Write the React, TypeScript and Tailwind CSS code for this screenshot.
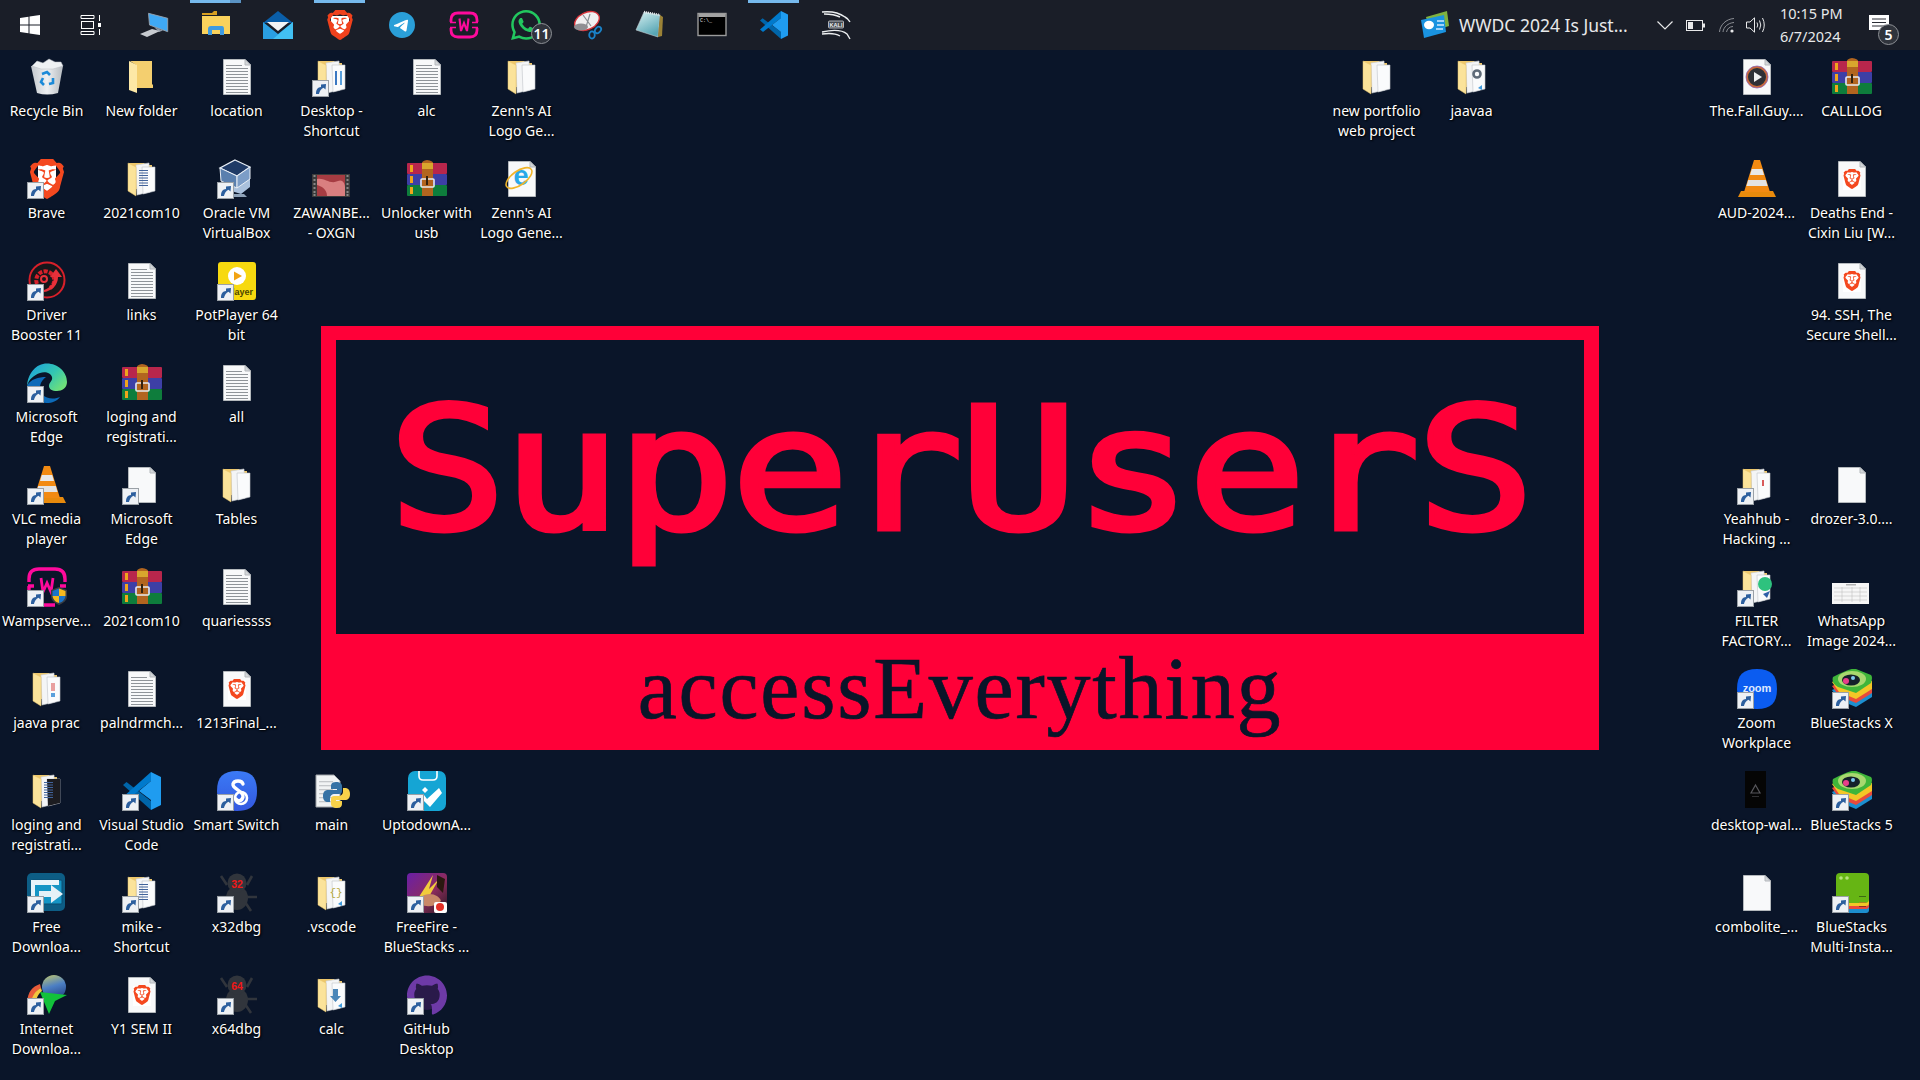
import React, { ReactNode } from 'react';
import { SiBrave, SiTelegram, SiWhatsapp, SiGithub } from 'react-icons/si';

// ---------- helpers ----------
function S({ children }: { children: ReactNode }) {
  return <svg viewBox="0 0 40 40" className="w-10 h-10 block">{children}</svg>;
}
function T({ children }: { children: ReactNode }) {
  return <svg viewBox="0 0 30 30" className="w-[30px] h-[30px] block">{children}</svg>;
}

function Shortcut() {
  return (
    <svg viewBox="0 0 17 17" className="absolute left-0 bottom-0 w-[17px] h-[17px]">
      <rect x="0.5" y="0.5" width="16" height="16" fill="#eef1f5" stroke="#9aa0a6" />
      <path d="M4 14 C4 9 6 7.5 9 7 L9 4.5 L14 4 L13.5 9.5 L11.5 7.8 C9 9 7.5 11 7 14 Z" fill="#2c5f9e" />
    </svg>
  );
}

// ---------- file type icons ----------
function Doc({ lines, children }: { lines?: boolean; children?: ReactNode }) {
  return (
    <S>
      <path d="M6.5 2.5 H28 L33.5 8 V37.5 H6.5 Z" fill="#f8f9fa" stroke="#b4b8bc" />
      <path d="M28 2.5 V8 H33.5 Z" fill="#d3d6d9" stroke="#b4b8bc" />
      {lines &&
        [8, 11, 14, 17, 20, 23, 26, 29, 32, 35].map(y => (
          <rect key={y} x="9" y={y} width={y === 8 ? 16 : 22} height="1" fill="#8f9499" />
        ))}
      {children}
    </S>
  );
}

function FileBrave() {
  return (
    <Doc>
      <rect x="11" y="11" width="18" height="20" fill="#fff" />
      <SiBrave x={10} y={10} size={20} color="#f4481f" />
    </Doc>
  );
}

function FileMovie() {
  return (
    <Doc>
      <circle cx="20" cy="20" r="10" fill="#2f3136" stroke="#c96a3a" strokeWidth="2" />
      <circle cx="20" cy="20" r="11" fill="none" stroke="#8d63b5" strokeWidth="0.8" />
      <path d="M17 15 L25 20 L17 25 Z" fill="#f2f2f2" />
    </Doc>
  );
}

function FileIE() {
  return (
    <Doc>
      <text x="19" y="26" textAnchor="middle" fontFamily="'Liberation Sans',sans-serif" fontWeight="700" fontSize="27" fill="#28a8e8">e</text>
      <ellipse cx="17" cy="19" rx="15" ry="7" transform="rotate(-35 17 19)" fill="none" stroke="#f0b429" strokeWidth="1.6" />
    </Doc>
  );
}

function FilePython() {
  return (
    <S>
      <path d="M4 4 H22 L28 10 V36 H4 Z" fill="#f1f3f4" stroke="#9fa3a7" />
      {[10, 14, 18, 22, 26, 30].map(y => (
        <rect key={y} x="7" y={y} width="14" height="1.3" fill="#c4c7ca" />
      ))}
      <path d="M24 11 C19 11 19 14 19 16 V18 H25 V19 H16 C13 19 11 21 11 25 C11 29 13 31 16 31 H18 V27 C18 25 20 23 22 23 H27 C29 23 30 22 30 20 V15 C30 13 28 11 24 11 Z" fill="#3572a5" />
      <path d="M25 37 C30 37 30 34 30 32 V30 H24 V29 H33 C36 29 38 27 38 23 C38 19 36 17 33 17 H31 V21 C31 23 29 25 27 25 H22 C20 25 19 26 19 28 V33 C19 35 21 37 25 37 Z" fill="#f8d24a" />
    </S>
  );
}

// ---------- folders ----------
function Folder({ children }: { children?: ReactNode }) {
  return (
    <S>
      <path d="M7 4 H22 L24 6 H30 V30 H7 Z" fill="#eec76a" />
      <path d="M14 6 L27 4 L28 33 L15 36 Z" fill="#f4f5f6" stroke="#c9ccd0" strokeWidth="0.6" />
      <path d="M20 8 L33 8 L33 32 L21 35 Z" fill="#fafbfc" stroke="#bfc3c7" strokeWidth="0.6" />
      {children}
      <path d="M6 4 L14 8 L14 37 L6 32 Z" fill="#fbe39a" stroke="#e6c36b" strokeWidth="0.5" />
    </S>
  );
}

function FolderEmpty() {
  return (
    <S>
      <path d="M8 4 H24 L30 4 V27 L31 28 V31 H14 V8 Z" fill="#f4cf6f" />
      <path d="M7 4 L15 8 V36 L7 33 Z" fill="#fde8a6" />
    </S>
  );
}

function DocLinesInFolder() {
  return (
    <g>
      {[11, 13.5, 16, 18.5, 21, 23.5, 26].map(y => (
        <rect key={y} x="17" y={y} width="9" height="1" fill="#41639a" />
      ))}
    </g>
  );
}

// ---------- app icons ----------
function RecycleBin() {
  return (
    <S>
      <defs>
        <linearGradient id="rb" x1="0" x2="1">
          <stop offset="0" stopColor="#c3c8cd" />
          <stop offset="0.5" stopColor="#eef0f2" />
          <stop offset="1" stopColor="#b6bbc0" />
        </linearGradient>
      </defs>
      <path d="M4 9 L36 9 L31 36 Q20 39 10 36 Z" fill="url(#rb)" />
      <path d="M5 9 L10 4 L16 6 L22 2 L28 5 L34 5 L36 9 L26 12 L14 12 Z" fill="#eef1f3" stroke="#b9bdc2" strokeWidth="0.5" />
      <path d="M15 17 L20 15 L23 18 M26 21 L26 26 L22 27 M17 28 L14 25 L16 21" fill="none" stroke="#1b8ad8" strokeWidth="2.6" />
    </S>
  );
}

function WinRar() {
  return (
    <S>
      <rect x="0" y="4" width="40" height="11" rx="1" fill="#b8264c" />
      <rect x="0" y="15" width="40" height="11" rx="1" fill="#3d3fa6" />
      <rect x="0" y="26" width="40" height="11" rx="1" fill="#0e7d3c" />
      <rect x="3" y="6" width="3" height="7" fill="#f0a51c" />
      <rect x="3" y="17" width="3" height="7" fill="#f0a51c" />
      <rect x="3" y="28" width="3" height="7" fill="#f0a51c" />
      <path d="M15 4 Q15 2 20 1 Q26 2 26 4 V37 H15 Z" fill="#b2651f" />
      <rect x="15" y="4" width="11" height="6" fill="#d8a62d" />
      <rect x="14" y="20" width="13" height="8" rx="1" fill="none" stroke="#e9ecef" strokeWidth="1.6" />
      <rect x="19" y="17" width="2" height="9" fill="#33220f" />
    </S>
  );
}

function Brave() {
  return (
    <S>
      <path d="M11 6 H29 V24 L20 34 L11 24 Z" fill="#fff" />
      <SiBrave x={0} y={0} size={40} color="#f4481f" />
    </S>
  );
}

function VirtualBox() {
  return (
    <S>
      <path d="M4 14 L20 22 L33 14 V28 L24 35 L8 30 Z" fill="#a9c0dc" />
      <path d="M16 35 L27 35 L30 38 L14 38 Z" fill="#8ea2b8" />
      <path d="M18 1 L33 8 L20 17 L3 9 Z" fill="#1f3a66" stroke="#e7edf5" strokeWidth="1.3" />
      <path d="M3 9 L20 17 V29 L4 22 Z" fill="#5a7fae" stroke="#e7edf5" strokeWidth="1" />
      <path d="M20 17 L33 8 V20 L20 29 Z" fill="#7c9dc7" stroke="#e7edf5" strokeWidth="1" />
    </S>
  );
}

function FilmThumb() {
  return (
    <S>
      <rect x="0" y="15" width="38" height="23" fill="#3a3a3a" />
      <rect x="5" y="16" width="28" height="21" fill="#a63c42" />
      <path d="M5 20 C12 18 18 26 26 22 C30 20 33 24 33 28 V37 H15 C15 30 9 27 5 26 Z" fill="#d97f80" />
      {[16, 20, 24, 28, 32, 35].map(y => (
        <g key={y}>
          <rect x="1.5" y={y} width="2" height="2" fill="#888" />
          <rect x="34.5" y={y} width="2" height="2" fill="#888" />
        </g>
      ))}
    </S>
  );
}

function DriverBooster() {
  return (
    <S>
      <circle cx="20" cy="19" r="17.5" fill="#17171b" stroke="#d8202a" strokeWidth="2" />
      <path d="M10 23 A9 9 0 1 1 23 27" fill="none" stroke="#d8202a" strokeWidth="4" strokeDasharray="4 1.4" />
      <circle cx="17" cy="18" r="3" fill="#17171b" stroke="#e8303a" strokeWidth="2" />
      <path d="M17 29 C24 27 27 21 27 16 H23 L29 8 L35 16 H31 C31 24 25 30 17 31 Z" fill="#e8303a" />
    </S>
  );
}

function PotPlayer() {
  return (
    <S>
      <rect x="1" y="1" width="38" height="38" rx="3" fill="#f7d90f" />
      <circle cx="20" cy="15" r="9" fill="#fff" />
      <path d="M17 10.5 L25 15 L17 19.5 Z" fill="#f2a312" />
      <text x="9" y="34" fontFamily="'Liberation Sans',sans-serif" fontWeight="700" fontSize="9" fill="#4c4600">Player</text>
    </S>
  );
}

function Edge() {
  return (
    <S>
      <defs>
        <linearGradient id="edgeA" x1="0" y1="0" x2="1" y2="0.7">
          <stop offset="0" stopColor="#1b9de2" />
          <stop offset="0.6" stopColor="#33c6b2" />
          <stop offset="1" stopColor="#6fe07a" />
        </linearGradient>
      </defs>
      <path d="M20 0.5 C31 0.5 40 9 40 19 C40 25 35 28 30 28 C25 28 22 26 22 23 C22 19 26 18 25 14 C24 10 18 8 13 10 C7 12 2 16 0 23 C1 10 9 0.5 20 0.5 Z" fill="url(#edgeA)" />
      <path d="M0 23 C0 33 9 40 20 40 C25 40 30 38 33 34 C29 36 20 37 15 31 C11 26 13 18 19 14 C12 14 3 16 0 23 Z" fill="#0d6ab8" />
    </S>
  );
}

function Vlc() {
  return (
    <S>
      <path d="M4 32 H36 L39 38 H1 Z" fill="#e88a0c" />
      <path d="M17 1 H23 L33 33 H7 Z" fill="#f28a12" />
      <path d="M14.8 10 H25.2 L27 16 H13 Z" fill="#e8e8e8" />
      <path d="M11.2 21 H28.8 L30.6 27 H9.4 Z" fill="#e3e3e3" />
    </S>
  );
}

function WampShield() {
  return (
    <svg viewBox="0 0 16 18" x="24" y="20" width="16" height="18">
      <path d="M8 0 L16 3 V9 C16 14 12 16 8 18 C4 16 0 14 0 9 V3 Z" fill="#3a3d42" />
      <path d="M8 1.5 V9 H1.5 V4 Z" fill="#1c74c9" />
      <path d="M8 1.5 L14.5 4 V9 H8 Z" fill="#f6b91e" />
      <path d="M1.5 9 H8 V16 C4 15 2 12 1.5 9 Z" fill="#f6b91e" />
      <path d="M8 9 H14.5 C14 12 12 15 8 16 Z" fill="#1c74c9" />
    </svg>
  );
}

function Wamp() {
  return (
    <S>
      <path d="M2 15 V12 C2 5 6 2 12 2 H28 C34 2 38 5 38 12 V15 M1 19 H7 M33 19 H39 M2 19 V27 C2 34 6 38 12 38 H28" fill="none" stroke="#ff0a9c" strokeWidth="3.4" />
      <path d="M14 11 L16 25 L20 16 L24 25 L26 11" fill="none" stroke="#ff0a9c" strokeWidth="2.8" />
      <WampShield />
    </S>
  );
}

function VsCode() {
  return (
    <S>
      <path d="M1 14 L4.5 11 L29 30 V39 Z" fill="#0065a9" />
      <path d="M29 1 V10 L5 29 L1 26 Z" fill="#007acc" />
      <path d="M29 1 L39 6 V34 L29 39 V29 L17 20 L29 10 Z" fill="#1f9cf0" />
    </S>
  );
}

function SmartSwitch() {
  return (
    <S>
      <defs>
        <linearGradient id="ss" x1="0" y1="0" x2="0" y2="1">
          <stop offset="0" stopColor="#3b7af5" />
          <stop offset="1" stopColor="#3358e0" />
        </linearGradient>
      </defs>
      <path d="M20 0 C34 0 40 6 40 20 C40 34 34 40 20 40 C6 40 0 34 0 20 C0 6 6 0 20 0 Z" fill="url(#ss)" />
      <path d="M26 13 C25 9 17 9 16 13 C15 18 27 20 26 26 C25 30 21 31 19 28" fill="none" stroke="#fff" strokeWidth="3.4" strokeLinecap="round" />
      <circle cx="24" cy="27" r="6" fill="none" stroke="#fff" strokeWidth="2.6" />
    </S>
  );
}

function Uptodown() {
  return (
    <S>
      <rect x="1" y="0" width="38" height="40" rx="7" fill="#15a5d4" />
      <path d="M12 0 V5 Q12 9 16 9 H26 Q30 9 30 5 V0" fill="none" stroke="#fff" strokeWidth="1.6" />
      <path d="M18 16 L21 19 L18 22 L15 19 Z" fill="#fff" />
      <path d="M20 28 L32 17 L35 22 L23 36 L14 27 L17 24 Z" fill="#fff" />
    </S>
  );
}

function Fdm() {
  return (
    <S>
      <rect x="0" y="0" width="38" height="38" rx="5" fill="#0d5d85" />
      <rect x="5" y="7" width="30" height="24" rx="1" fill="#1595c5" stroke="#0a4c70" />
      <rect x="4" y="7" width="28" height="5" fill="#e8f4fa" />
      <rect x="4" y="7" width="4" height="22" fill="#e8f4fa" />
      <path d="M12 18 H24 V12 L36 21 L24 30 V24 H12 Z" fill="#e6f1f7" />
    </S>
  );
}

function Bug({ n }: { n: string }) {
  return (
    <S>
      <path d="M4 3 L10 12 M35 3 L30 12 M0 24 H40 M5 38 L12 29 M34 38 L28 29" stroke="#31353c" strokeWidth="2.6" fill="none" />
      <ellipse cx="20" cy="25" rx="11" ry="12" fill="#31353c" />
      <circle cx="20" cy="10" r="9.5" fill="#31353c" />
      <text x="20" y="14.5" textAnchor="middle" fontFamily="'Liberation Sans',sans-serif" fontWeight="700" fontSize="10.5" fill="#f01818">{n}</text>
    </S>
  );
}

function FreeFire() {
  return (
    <S>
      <defs>
        <linearGradient id="ff" x1="0" y1="0" x2="1" y2="1">
          <stop offset="0" stopColor="#6a1fa8" />
          <stop offset="0.55" stopColor="#8c2b5e" />
          <stop offset="1" stopColor="#2b1a22" />
        </linearGradient>
      </defs>
      <rect x="0" y="0" width="40" height="40" rx="4" fill="url(#ff)" />
      <path d="M8 30 L26 2 L22 16 L32 6 L16 34 Z" fill="#f1cc3c" />
      <path d="M14 24 C22 18 32 22 34 28 C28 34 20 34 14 32 Z" fill="#c98868" />
      <path d="M30 2 L38 6 L36 20 L30 14 Z" fill="#2a1810" />
      <rect x="27" y="29" width="13" height="11" rx="2" fill="#fff" />
      <circle cx="33" cy="34" r="4" fill="#e53027" />
    </S>
  );
}

function Idm() {
  return (
    <S>
      <defs>
        <linearGradient id="idm" x1="0" y1="0" x2="0.3" y2="1">
          <stop offset="0" stopColor="#c4c86a" />
          <stop offset="0.55" stopColor="#4c7fc4" />
          <stop offset="1" stopColor="#2b4d90" />
        </linearGradient>
      </defs>
      <path d="M0 28 C1 16 5 12 13 9 L14 13 C9 16 6 20 6 30 Z" fill="#e85c3a" />
      <path d="M4 30 C4 22 8 16 14 13 L15 16 C11 19 9 23 9 30 Z" fill="#f2c63d" />
      <circle cx="27" cy="12" r="12" fill="url(#idm)" />
      <path d="M13 17 L40 20 L28 26 L22 39 Z" fill="#12c23a" />
    </S>
  );
}

function GitHubDesk() {
  return (
    <S>
      <circle cx="20" cy="20" r="15" fill="#2a1a4a" />
      <SiGithub x={0} y={0} size={40} color="#6e3aa7" />
    </S>
  );
}

function Zoom() {
  return (
    <S>
      <path d="M20 0 C34 0 40 6 40 20 C40 34 34 40 20 40 C6 40 0 34 0 20 C0 6 6 0 20 0 Z" fill="#0b5cf0" />
      <text x="20" y="23" textAnchor="middle" fontFamily="'Liberation Sans',sans-serif" fontWeight="700" fontSize="11" fill="#dfe9ff">zoom</text>
    </S>
  );
}

function BlueStacks() {
  return (
    <S>
      <path d="M0 21 L7 31 L24 38 L40 28 V20 L20 12 Z" fill="#1c8fd0" />
      <path d="M0 17 L7 27 L24 34 L40 24 V16 L20 8 Z" fill="#e94b3c" />
      <path d="M0 13 L7 23 L24 30 L40 20 V12 L20 4 Z" fill="#f4c627" />
      <path d="M1 8 Q20 -2 24 0 L39 6 Q41 8 39 14 L24 24 L6 18 Q-1 14 1 8 Z" fill="#3fb53a" />
      <ellipse cx="20" cy="10" rx="14" ry="8" fill="#a8d86f" />
      <ellipse cx="19" cy="11" rx="9" ry="5.5" fill="#14202a" />
      <circle cx="14" cy="12" r="3" fill="#e83d8a" />
      <circle cx="21" cy="9" r="2" fill="#7ec8f0" />
    </S>
  );
}

function BlueStacksMulti() {
  return (
    <S>
      <rect x="4" y="22" width="33" height="18" rx="3" fill="#1c8fd0" />
      <rect x="4" y="19" width="33" height="17" rx="3" fill="#e94b3c" />
      <rect x="4" y="16" width="33" height="17" rx="3" fill="#f4c627" />
      <rect x="4" y="0" width="33" height="30" rx="4" fill="#66b514" />
      <circle cx="9" cy="5" r="1.8" fill="#b6e27c" />
      <circle cx="15" cy="5" r="1.8" fill="#b6e27c" />
      <rect x="27" y="23" width="7" height="1" fill="#3c6b12" />
      <rect x="27" y="29" width="7" height="1" fill="#a6861e" />
      <rect x="27" y="33" width="7" height="1" fill="#8d2e24" />
    </S>
  );
}

function ImageThumb() {
  return (
    <S>
      <rect x="0" y="16" width="37" height="21" fill="#f6f6f6" />
      <path d="M2 21 H35 M2 25 H35 M2 29 H35 M2 33 H35 M10 20 V35 M20 20 V35 M28 20 V35" stroke="#b5b5b5" strokeWidth="0.5" />
      <rect x="14" y="17" width="10" height="1.5" fill="#b0b0b0" />
    </S>
  );
}

function DarkThumb() {
  return (
    <S>
      <rect x="8" y="0" width="21" height="37" fill="#050505" />
      <path d="M18.5 14 L23 22 H14 Z" fill="none" stroke="#57575c" strokeWidth="1.2" />
      <rect x="15" y="25" width="7" height="0.8" fill="#3c3c40" />
    </S>
  );
}

// ---------- desktop data ----------
const items: [string, ReactNode, string[], boolean?][] = [
  ['col-start-1 row-start-1', <RecycleBin />, ['Recycle Bin']],
  ['col-start-1 row-start-2', <Brave />, ['Brave'], true],
  ['col-start-1 row-start-3', <DriverBooster />, ['Driver', 'Booster 11'], true],
  ['col-start-1 row-start-4', <Edge />, ['Microsoft', 'Edge'], true],
  ['col-start-1 row-start-5', <Vlc />, ['VLC media', 'player'], true],
  ['col-start-1 row-start-6', <Wamp />, ['Wampserve...'], true],
  [
    'col-start-1 row-start-7',
    <Folder>
      <rect x="24" y="14" width="4" height="8" fill="#e8a0a0" />
      <rect x="24" y="24" width="4" height="4" fill="#5aa0dc" />
    </Folder>,
    ['jaava prac'],
  ],
  [
    'col-start-1 row-start-8',
    <Folder>
      <path d="M20 8 L33 8 L33 32 L21 35 Z" fill="#1c1c20" />
      <DocLinesInFolder />
    </Folder>,
    ['loging and', 'registrati...'],
  ],
  ['col-start-1 row-start-9', <Fdm />, ['Free', 'Downloa...'], true],
  ['col-start-1 row-start-10', <Idm />, ['Internet', 'Downloa...'], true],

  ['col-start-2 row-start-1', <FolderEmpty />, ['New folder']],
  [
    'col-start-2 row-start-2',
    <Folder>
      <DocLinesInFolder />
    </Folder>,
    ['2021com10'],
  ],
  ['col-start-2 row-start-3', <Doc lines />, ['links']],
  ['col-start-2 row-start-4', <WinRar />, ['loging and', 'registrati...']],
  ['col-start-2 row-start-5', <Doc />, ['Microsoft', 'Edge'], true],
  ['col-start-2 row-start-6', <WinRar />, ['2021com10']],
  ['col-start-2 row-start-7', <Doc lines />, ['palndrmch...']],
  ['col-start-2 row-start-8', <VsCode />, ['Visual Studio', 'Code'], true],
  [
    'col-start-2 row-start-9',
    <Folder>
      <DocLinesInFolder />
    </Folder>,
    ['mike -', 'Shortcut'],
    true,
  ],
  ['col-start-2 row-start-10', <FileBrave />, ['Y1 SEM II']],

  ['col-start-3 row-start-1', <Doc lines />, ['location']],
  ['col-start-3 row-start-2', <VirtualBox />, ['Oracle VM', 'VirtualBox'], true],
  ['col-start-3 row-start-3', <PotPlayer />, ['PotPlayer 64', 'bit'], true],
  ['col-start-3 row-start-4', <Doc lines />, ['all']],
  ['col-start-3 row-start-5', <Folder />, ['Tables']],
  ['col-start-3 row-start-6', <Doc lines />, ['quariessss']],
  ['col-start-3 row-start-7', <FileBrave />, ['1213Final_...']],
  ['col-start-3 row-start-8', <SmartSwitch />, ['Smart Switch'], true],
  ['col-start-3 row-start-9', <Bug n="32" />, ['x32dbg'], true],
  ['col-start-3 row-start-10', <Bug n="64" />, ['x64dbg'], true],

  [
    'col-start-4 row-start-1',
    <Folder>
      <rect x="23" y="14" width="2" height="14" fill="#3a78c2" />
      <rect x="28" y="14" width="2" height="14" fill="#5aa0dc" />
    </Folder>,
    ['Desktop -', 'Shortcut'],
    true,
  ],
  ['col-start-4 row-start-2', <FilmThumb />, ['ZAWANBE...', '- OXGN']],
  ['col-start-4 row-start-8', <FilePython />, ['main']],
  [
    'col-start-4 row-start-9',
    <Folder>
      <text x="24" y="23" textAnchor="middle" fontFamily="'Liberation Mono',monospace" fontSize="11" fill="#b8a83c">{'{}'}</text>
      <path d="M30 28 L26 31 L30 33 Z" fill="#3f9adc" />
    </Folder>,
    ['.vscode'],
  ],
  [
    'col-start-4 row-start-10',
    <Folder>
      <path d="M21 14 H26 V21 H29 L23.5 27 L18 21 H21 Z" fill="#4b86b8" />
      <path d="M30 28 L26 31 L30 33 Z" fill="#3f9adc" />
    </Folder>,
    ['calc'],
  ],

  ['col-start-5 row-start-1', <Doc lines />, ['alc']],
  ['col-start-5 row-start-2', <WinRar />, ['Unlocker with', 'usb']],
  ['col-start-5 row-start-8', <Uptodown />, ['UptodownA...'], true],
  ['col-start-5 row-start-9', <FreeFire />, ['FreeFire -', 'BlueStacks ...'], true],
  ['col-start-5 row-start-10', <GitHubDesk />, ['GitHub', 'Desktop'], true],

  ['col-start-6 row-start-1', <Folder />, ["Zenn's AI", 'Logo Ge...']],
  ['col-start-6 row-start-2', <FileIE />, ["Zenn's AI", 'Logo Gene...']],

  ['col-start-15 row-start-1', <Folder />, ['new portfolio', 'web project']],
  [
    'col-start-16 row-start-1',
    <Folder>
      <circle cx="25" cy="17" r="3.5" fill="none" stroke="#5f6b78" strokeWidth="2.6" />
      <path d="M30 28 L26 31 L30 33 Z" fill="#3f9adc" />
    </Folder>,
    ['jaavaa'],
  ],

  ['col-start-19 row-start-1', <FileMovie />, ['The.Fall.Guy....']],
  ['col-start-19 row-start-2', <Vlc />, ['AUD-2024...']],
  [
    'col-start-19 row-start-5',
    <Folder>
      <rect x="25" y="15" width="2" height="6" fill="#d85a5a" />
    </Folder>,
    ['Yeahhub -', 'Hacking ...'],
    true,
  ],
  [
    'col-start-19 row-start-6',
    <Folder>
      <circle cx="28" cy="17" r="7" fill="#2ec27e" />
      <path d="M26 27 L33 24 L30 31 Z" fill="#2f5fa8" />
    </Folder>,
    ['FILTER', 'FACTORY...'],
    true,
  ],
  ['col-start-19 row-start-7', <Zoom />, ['Zoom', 'Workplace'], true],
  ['col-start-19 row-start-8', <DarkThumb />, ['desktop-wal...']],
  ['col-start-19 row-start-9', <Doc />, ['combolite_...']],

  ['col-start-20 row-start-1', <WinRar />, ['CALLLOG']],
  ['col-start-20 row-start-2', <FileBrave />, ['Deaths End -', 'Cixin Liu [W...']],
  ['col-start-20 row-start-3', <FileBrave />, ['94. SSH, The', 'Secure Shell...']],
  ['col-start-20 row-start-5', <Doc />, ['drozer-3.0....']],
  ['col-start-20 row-start-6', <ImageThumb />, ['WhatsApp', 'Image 2024...']],
  ['col-start-20 row-start-7', <BlueStacks />, ['BlueStacks X'], true],
  ['col-start-20 row-start-8', <BlueStacks />, ['BlueStacks 5'], true],
  ['col-start-20 row-start-9', <BlueStacksMulti />, ['BlueStacks', 'Multi-Insta...'], true],
];

function DesktopIcon({ cell, icon, lines, shortcut }: { cell: string; icon: ReactNode; lines: string[]; shortcut?: boolean }) {
  return (
    <div className={`${cell} flex flex-col items-center pt-[7px]`}>
      <div className="relative w-10 h-10">
        {icon}
        {shortcut && <Shortcut />}
      </div>
      <div className="mt-[4px] text-center text-white text-[14px] leading-5 whitespace-nowrap [text-shadow:1px_1px_2px_#000,0_0_2px_#000]">
        {lines.map((l, i) => (
          <div key={i}>{l}</div>
        ))}
      </div>
    </div>
  );
}

// ---------- taskbar ----------
const taskIcons: [ReactNode, boolean?, boolean?][] = [
  [
    <T>
      <path d="M9.5 3.3 L28.7 8.3 V21.7 L10.5 15 Z" fill="#3fa9f5" stroke="#9aa3ad" strokeWidth="0.9" />
      <path d="M15 17 L24 20.5 L20 22 Z" fill="#8d98a5" />
      <path d="M1 24 L13 19 L21 21 L8 27 Z" fill="#c7cbd0" />
    </T>,
  ],
  [
    <T>
      <path d="M1 3 H11 L13 1 H16 V5 H1 Z" fill="#d89f20" />
      <path d="M1 6 H29 V24 H1 Z" fill="#fad25c" />
      <path d="M10 24 V18 Q10 15 13 15 H24 Q26 15 26 18 V24 H22 V19 H14 V24 Z" fill="#3f9be0" transform="translate(-3 1)" />
    </T>,
    true,
    true,
  ],
  [
    <T>
      <path d="M15 1 L30 13 H0 Z" fill="#0a5ea8" />
      <path d="M4 12 H26 L15 21 Z" fill="#f2f4f5" />
      <path d="M0 12 L15 24 L30 12 V29 H0 Z" fill="#2a9fe2" />
      <path d="M30 12 V29 H10 Z" fill="#42c0f2" />
    </T>,
  ],
  [
    <T>
      <path d="M6 6 H24 V18 L15 29 L6 18 Z" fill="#fff" />
      <SiBrave x={0} y={0} size={30} color="#f0411c" />
    </T>,
    true,
  ],
  [
    <T>
      <circle cx="15" cy="15" r="11" fill="#fff" />
      <SiTelegram x={2} y={2} size={26} color="#2a9fd8" />
    </T>,
  ],
  [
    <T>
      <path d="M2 12 V10 C2 5 5 3 9 3 H21 C25 3 28 5 28 10 V12 M2 18 V20 C2 25 5 27 9 27 H21 C25 27 28 25 28 20 V18" fill="none" stroke="#ff0a9c" strokeWidth="2.8" />
      <path d="M1 12.5 H7 M23 12.5 H29 M1 17.5 H7 M23 17.5 H29" stroke="#ff0a9c" strokeWidth="1.5" />
      <path d="M10.5 8.5 L12 21 L15 13 L18 21 L19.5 8.5" fill="none" stroke="#ff0a9c" strokeWidth="2.1" />
    </T>,
  ],
  [
    <T>
      <SiWhatsapp x={0} y={0} size={30} color="#22c75f" />
    </T>,
  ],
  [
    <T>
      <ellipse cx="14" cy="11" rx="13" ry="8.5" transform="rotate(-25 14 11)" fill="#f0eff0" stroke="#d8333a" strokeWidth="1.4" />
      <path d="M10 5 L18 16 M17 4 L13 17" stroke="#8a8f94" strokeWidth="1.2" />
      <ellipse cx="8" cy="17" rx="7" ry="3.4" fill="#8f8f93" />
      <ellipse cx="19" cy="25" rx="2.8" ry="3.6" fill="none" stroke="#1a82c8" strokeWidth="1.8" />
      <ellipse cx="25" cy="20" rx="2.6" ry="3.6" transform="rotate(40 25 20)" fill="none" stroke="#1a82c8" strokeWidth="1.8" />
    </T>,
  ],
  [
    <T>
      <defs>
        <linearGradient id="np" x1="0" y1="0" x2="0.5" y2="1">
          <stop offset="0" stopColor="#d8f1f2" />
          <stop offset="1" stopColor="#57a6b4" />
        </linearGradient>
      </defs>
      <path d="M9 2 L25 5 L23 27 L1 20 Z" fill="url(#np)" stroke="#c5cdd2" strokeWidth="0.6" />
      <path d="M25 5 L28 7 L27 26 L23 27 Z" fill="#9b8236" />
      <path d="M9 2 L25 5" stroke="#e7ecee" strokeWidth="2.4" strokeDasharray="1 1" />
    </T>,
  ],
  [
    <T>
      <rect x="1" y="3.5" width="28" height="22" fill="#000" stroke="#9b9b9b" strokeWidth="1.4" />
      <rect x="1.5" y="4" width="27" height="3" fill="#a2a2a2" />
      <text x="3" y="12" fontFamily="'Liberation Mono',monospace" fontSize="5" fill="#e5e5e5">C:\_</text>
    </T>,
  ],
  [
    <T>
      <path d="M1 10.5 L3.6 8.3 L22 22 V29 Z" fill="#0065a9" />
      <path d="M22 1 V8 L4 22 L1 19.5 Z" fill="#007acc" />
      <path d="M22 1 L29 4.5 V25.5 L22 29 V22 L13 15 L22 8 Z" fill="#1f9cf0" />
    </T>,
    true,
  ],
  [
    <T>
      <path d="M1 2 C10 1 17 2 24 7 C26 8 28 10 29 12 M3 4 C8 4 13 4 19 7" fill="none" stroke="#eceff1" strokeWidth="1.4" />
      <path d="M1 22 C10 20 20 19 26 24 L29 29 M1 24 C8 23 14 23 19 26" fill="none" stroke="#eceff1" strokeWidth="1.4" />
      <rect x="7.5" y="11" width="15" height="7" rx="1" fill="#474b52" stroke="#d3d6d9" strokeWidth="0.8" />
      <text x="15" y="17" textAnchor="middle" fontFamily="'Liberation Sans',sans-serif" fontSize="5.5" fontWeight="700" fill="#eceff1">KALI</text>
    </T>,
  ],
];

function Badge({ n, className }: { n: string; className: string }) {
  return (
    <div className={`absolute flex items-center justify-center w-[21px] h-[21px] rounded-full bg-[#30343c] border border-[#8e9196] text-white text-[14px] font-semibold ${className}`}>
      {n}
    </div>
  );
}

function Taskbar() {
  return (
    <div className="h-[50px] shrink-0 bg-[#1a1e28] flex items-center">
      <div className="w-[60px] flex justify-center">
        <svg viewBox="0 0 20 20" className="w-5 h-5">
          <path d="M0 3 L8.5 1.8 V9.5 H0 Z M9.5 1.6 L20 0 V9.5 H9.5 Z M0 10.5 H8.5 V18.2 L0 17 Z M9.5 10.5 H20 V20 L9.5 18.4 Z" fill="#fff" />
        </svg>
      </div>
      <div className="w-[60px] flex justify-center">
        <svg viewBox="0 0 21 20" className="w-[21px] h-5" fill="none" stroke="#fff" strokeWidth="1">
          <path d="M1 .5 H14 M1 3.5 H14 M1 16.5 H14 M1 19.5 H14 M1 .5 V3.5 M14 .5 V3.5 M1 16.5 V19.5 M14 16.5 V19.5" />
          <rect x="1.5" y="6.5" width="12" height="7" />
          <path d="M19.5 0 V6 M19.5 14 V20" />
          <rect x="18" y="8" width="3" height="4" fill="#fff" stroke="none" />
        </svg>
      </div>
      <div className="w-[3px]" />
      {taskIcons.map(([icon, active, multi], i) => (
        <div key={i} className="relative w-[62px] h-[50px] flex items-center justify-center">
          {active && (
            <div className="absolute top-0 left-[5px] w-[51px] h-[3px] bg-[#76b9ed] flex justify-end">
              {multi && <div className="w-[11px] h-[3px] bg-[#5a93c4]" />}
            </div>
          )}
          {icon}
          {i === 6 && <Badge n="11" className="left-[36px] top-[23px]" />}
        </div>
      ))}

      <div className="flex-1" />

      <svg viewBox="0 0 30 30" className="w-[30px] h-[30px] mr-[9px]">
        <path d="M6 7 L27 1 L29 16 L10 22 Z" fill="#7fb23f" />
        <path d="M1 10 L24 5 L26 22 L4 28 Z" fill="#1a93e0" />
        <ellipse cx="9" cy="15" rx="5" ry="4.2" fill="#fff" />
        <path d="M17 11 H24 M17 15 H24 M16 19 H23" stroke="#cfeaff" strokeWidth="1.4" />
      </svg>
      <div className="text-[17.5px] text-[#e8e9ea] whitespace-nowrap w-[198px]">WWDC 2024 Is Just...</div>

      <svg viewBox="0 0 16 9" className="w-4 h-[9px] mr-[13px]" fill="none" stroke="#e8e9ea" strokeWidth="1.2">
        <path d="M.5 .5 L8 8 L15.5 .5" />
      </svg>
      <svg viewBox="0 0 19 11" className="w-[19px] h-[11px] mr-[14px]">
        <rect x=".5" y=".5" width="16" height="10" fill="none" stroke="#e8e9ea" />
        <rect x="2" y="2" width="5" height="7" fill="#e8e9ea" />
        <rect x="17" y="3.5" width="2" height="4" fill="#e8e9ea" />
      </svg>
      <svg viewBox="0 0 16 15" className="w-4 h-[15px] mr-[11px]" fill="none" stroke="#8b8e94" strokeWidth="1">
        <path d="M.5 14 C1 7 7 1 15 .5 M4 14 C4.5 9 9 5 15 4.5 M7.5 14 C8 11 10.5 8.5 14 8.5" />
        <circle cx="13" cy="13" r="1.6" fill="#e8e9ea" stroke="none" />
      </svg>
      <svg viewBox="0 0 20 16" className="w-5 h-4 mr-[14px]" fill="none" stroke="#e8e9ea" strokeWidth="1">
        <path d="M.5 5 H4 L8.5 .8 V15.2 L4 11 H.5 Z" />
        <path d="M11 5.5 Q12.5 8 11 10.5 M13.5 3.5 Q16 8 13.5 12.5 M16.5 1 Q20 8 16.5 15" />
      </svg>
      <div className="w-[60px] text-[14.5px] leading-[23px] text-[#e8e9ea] text-center whitespace-nowrap mr-[29px]">
        <div>10:15 PM</div>
        <div>6/7/2024</div>
      </div>
      <div className="relative w-[20px] h-[17px] mr-[31px] mt-[-3px]">
        <svg viewBox="0 0 20 17" className="w-5 h-[17px]">
          <rect width="20" height="15" fill="#fff" />
          <path d="M3 4 H17 M3 7.5 H17 M3 11 H17" stroke="#2a2d35" strokeWidth="1" />
        </svg>
        <Badge n="5" className="left-[9px] top-[9px]" />
      </div>
    </div>
  );
}

export default function App() {
  return (
    <div className="w-[1920px] h-[1080px] overflow-hidden flex flex-col bg-[#0a1529]" style={{ fontFamily: "'Noto Sans', sans-serif" }}>
      <Taskbar />
      <div className="relative flex-1">
        {/* wallpaper logo */}
        <div className="absolute left-[321px] top-[276px] w-[1278px] h-[424px] bg-[#ff0038] flex flex-col px-[15px] pt-[14px]">
          <div className="h-[294px] shrink-0 bg-[#0a1529] flex justify-center pt-[45px]">
            <div className="text-[170px] leading-[170px] tracking-[-3px] text-[#ff0038] whitespace-nowrap scale-x-[1.15] [-webkit-text-stroke:5px_#ff0038]" style={{ fontFamily: "'DejaVu Sans Mono', monospace" }}>
              SuperUserS
            </div>
          </div>
          <div className="flex justify-center pt-[11px]">
            <div className="text-[88px] leading-[88px] tracking-[1.8px] text-[#0a1529] whitespace-nowrap [-webkit-text-stroke:0.7px_#0a1529]" style={{ fontFamily: "'Liberation Serif', serif" }}>
              accessEverything
            </div>
          </div>
        </div>

        {/* icon grid */}
        <div className="relative ml-[-1px] grid grid-cols-[repeat(20,95px)] grid-rows-[repeat(10,102px)]">
          {items.map(([cell, icon, lines, shortcut], i) => (
            <DesktopIcon key={i} cell={cell} icon={icon} lines={lines} shortcut={shortcut} />
          ))}
        </div>
      </div>
    </div>
  );
}
